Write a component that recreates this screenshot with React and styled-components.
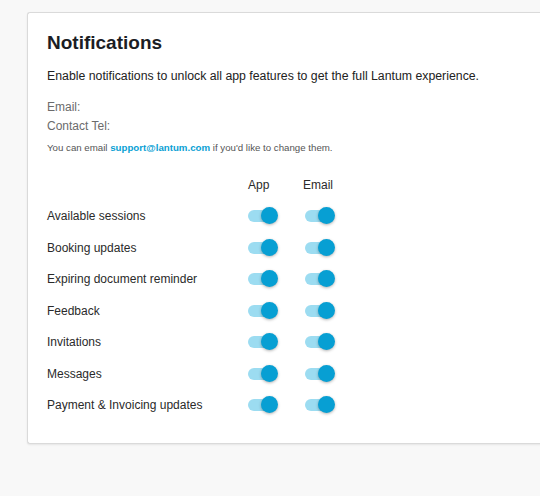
import React from "react";
import styled, { createGlobalStyle } from "styled-components";

const GlobalStyle = createGlobalStyle`
  html, body {
    margin: 0;
    padding: 0;
    background: #f8f8f8;
    font-family: "Liberation Sans", Arial, sans-serif;
  }
`;

const Page = styled.div`
  padding: 12px 0 0 27px;
  height: 484px;
  overflow: hidden;
`;

const Card = styled.section`
  width: 540px;
  background: #fff;
  border: 1px solid #dadada;
  border-right: none;
  border-radius: 3px 0 0 3px;
  box-shadow: 0 1px 2px rgba(0, 0, 0, 0.08);
  padding: 18px 0 22px 19px;
  box-sizing: border-box;
`;

const Title = styled.h2`
  margin: 0;
  font-size: 19px;
  font-weight: 700;
  color: #1b1d24;
  line-height: 24px;
`;

const Intro = styled.p`
  margin: 13px 0 0;
  font-size: 12.3px;
  line-height: 16px;
  color: #222;
`;

const Detail = styled.div`
  margin-top: ${p => p.$first ? "15px" : "3px"};
  font-size: 12px;
  line-height: 16px;
  color: #6b6b6b;
`;

const Note = styled.p`
  margin: 7px 0 0;
  font-size: 9.7px;
  line-height: 14px;
  color: #555;
`;

const Link = styled.a`
  color: #0a9fd4;
  text-decoration: none;
  font-weight: 700;
`;

const Table = styled.div`
  margin-top: 14px;
  display: grid;
  grid-template-columns: 201px 55px 55px;
  grid-auto-rows: 31.5px;
  align-items: center;
`;

const Head = styled.div`
  font-size: 12px;
  color: #2a2a2a;
`;

const Label = styled.div`
  font-size: 12px;
  color: #2a2a2a;
`;

const Switch = styled.div`
  position: relative;
  width: 30px;
  height: 18px;
  margin-left: ${p => p.$offset || 0}px;
`;

const Track = styled.div`
  position: absolute;
  left: 0;
  top: 3px;
  width: 27px;
  height: 12px;
  border-radius: 6px;
  background: #9cdcf1;
`;

const Thumb = styled.div`
  position: absolute;
  left: 13px;
  top: 0;
  width: 17px;
  height: 17px;
  border-radius: 50%;
  background: #079fd3;
  box-shadow: 0 1px 3px rgba(0, 0, 0, 0.3);
`;

const Toggle = ({ offset }) => (
  <Switch $offset={offset}>
    <Track />
    <Thumb />
  </Switch>
);

const rows = [
  "Available sessions",
  "Booking updates",
  "Expiring document reminder",
  "Feedback",
  "Invitations",
  "Messages",
  "Payment & Invoicing updates",
];

export default function App() {
  return (
    <Page>
      <GlobalStyle />
      <Card>
        <Title>Notifications</Title>
        <Intro>
          Enable notifications to unlock all app features to get the full Lantum experience.
        </Intro>
        <Detail $first>Email:</Detail>
        <Detail>Contact Tel:</Detail>
        <Note>
          You can email <Link href="#">support@lantum.com</Link> if you'd like to change them.
        </Note>
        <Table>
          <div />
          <Head>App</Head>
          <Head>Email</Head>
          {rows.map(r => (
            <React.Fragment key={r}>
              <Label>{r}</Label>
              <Toggle />
              <Toggle offset={2} />
            </React.Fragment>
          ))}
        </Table>
      </Card>
    </Page>
  );
}
